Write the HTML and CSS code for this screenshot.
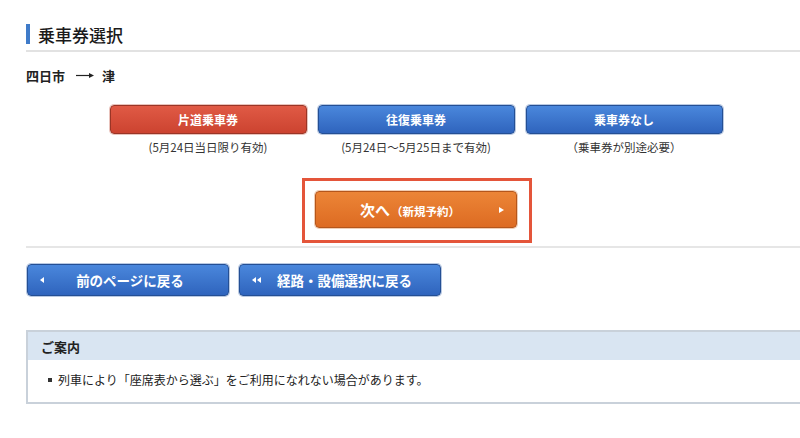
FILE: index.html
```html
<!DOCTYPE html>
<html lang="ja">
<head>
<meta charset="utf-8">
<link rel="stylesheet" href="styles.css">
</head>
<body>
<div class="page">
  <h1 class="title"><span class="title-bar"></span>乗車券選択</h1>
  <div class="route">四日市<span class="arrow"><svg width="20" height="8" viewBox="0 0 20 8"><path d="M1 4.5H16" stroke="#222" stroke-width="1.2"/><path d="M14 2L19 4.5L14 7Z" fill="#222"/></svg></span>津</div>

  <div class="tickets">
    <div class="ticket">
      <button class="btn btn-red">片道乗車券</button>
      <div class="note">(5月24日当日限り有効)</div>
    </div>
    <div class="ticket">
      <button class="btn btn-blue">往復乗車券</button>
      <div class="note">(5月24日～5月25日まで有効)</div>
    </div>
    <div class="ticket">
      <button class="btn btn-blue">乗車券なし</button>
      <div class="note">（乗車券が別途必要）</div>
    </div>
  </div>

  <div class="next-wrap">
    <div class="next-frame">
      <button class="btn btn-orange"><span class="next-label">次へ<small>（新規予約）</small></span><span class="tri-r"></span></button>
    </div>
  </div>

  <div class="back-row">
    <button class="btn btn-blue btn-back"><span class="tri-l"></span><span class="back-label">前のページに戻る</span></button>
    <button class="btn btn-blue btn-back"><span class="dtri"><span class="tri-l"></span><span class="tri-l"></span></span><span class="back-label">経路・設備選択に戻る</span></button>
  </div>

  <div class="info">
    <div class="info-head">ご案内</div>
    <ul class="info-list">
      <li>列車により「座席表から選ぶ」をご利用になれない場合があります。</li>
    </ul>
  </div>
</div>
</body>
</html>
```

FILE: styles.css
```css
* { box-sizing: border-box; }
html, body { margin: 0; padding: 0; background: #fff; }
body {
  font-family: "Noto Sans CJK JP", "Noto Sans", sans-serif;
  color: #222;
  width: 800px;
  height: 438px;
  overflow: hidden;
}
.page { padding: 22px 0 0 26px; }

.title {
  display: flex;
  align-items: center;
  margin: 0;
  font-size: 17px;
  font-weight: 500;
  color: #1a1a1a;
  border-bottom: 2px solid #e2e2e2;
  padding-bottom: 4px;
  height: 30px;
}
.title-bar {
  display: block;
  width: 4px;
  height: 20px;
  background: #3f7bc9;
  margin-right: 8px;
}

.route {
  display: flex;
  align-items: center;
  margin-top: 14px;
  font-size: 13px;
  font-weight: 700;
  height: 18px;
}
.arrow { display: inline-flex; margin: 0 7px 0 10px; }

.tickets {
  display: flex;
  justify-content: center;
  gap: 11px;
  margin-top: 21px;
  padding-left: 6px;
}
.ticket { display: flex; flex-direction: column; align-items: center; width: 197px; }
.note { font-size: 11.5px; color: #333; margin-top: 5px; line-height: 16px; }

.btn {
  font-family: inherit;
  color: #fff;
  font-weight: 700;
  cursor: pointer;
  border-radius: 4px;
  padding: 0;
}
.tickets .btn { width: 197px; height: 29px; font-size: 12px; }
.btn-red {
  background: linear-gradient(#e05a45, #cc4330);
  border: 1px solid #9a3526;
  box-shadow: 0 0 0 1px #e9c3bc;
}
.btn-blue {
  background: linear-gradient(#4a87dc, #2f64bd);
  border: 1px solid #244f94;
  box-shadow: 0 0 0 1px #b9c9e2;
}
.btn-orange {
  background: linear-gradient(#ec8537, #dd6b22);
  border: 1px solid #b5561b;
  box-shadow: 0 0 0 1px #f0cdb4;
}

.next-wrap {
  display: flex;
  justify-content: center;
  border-bottom: 2px solid #e6e6e6;
  padding-bottom: 3px;
  margin-top: 23px;
}
.next-frame {
  border: 3px solid #e4553a;
  padding: 10px 12px 12px 10px;
  margin-left: 8px;
}
.btn-orange {
  width: 202px;
  height: 37px;
  display: flex;
  align-items: center;
  justify-content: center;
  position: relative;
  font-size: 15px;
}
.next-label { display: flex; align-items: baseline; margin-left: -12px; }
.next-label small { font-size: 11.5px; font-weight: 700; margin-left: 1px; }
.tri-r {
  position: absolute;
  right: 12px;
  top: 50%;
  margin-top: -3px;
  width: 0; height: 0;
  border-left: 5px solid #fff;
  border-top: 3.5px solid transparent;
  border-bottom: 3.5px solid transparent;
}

.back-row {
  display: flex;
  gap: 10px;
  margin-top: 16px;
  padding-left: 1px;
}
.btn-back {
  width: 202px;
  height: 32px;
  display: flex;
  align-items: center;
  font-size: 13.5px;
  padding-left: 12px;
}
.tri-l {
  display: block;
  width: 0; height: 0;
  border-right: 4px solid #fff;
  border-top: 3px solid transparent;
  border-bottom: 3px solid transparent;
}
.dtri { display: flex; gap: 1px; }
.back-label { flex: 1; text-align: center; padding-right: 12px; }

.info {
  margin-top: 34px;
  border: 2px solid #c9d1da;
  border-right: none;
}
.info-head {
  background: #d9e5f2;
  height: 28px;
  display: flex;
  align-items: center;
  padding-left: 13px;
  font-size: 13px;
  font-weight: 700;
}
.info-list {
  margin: 0;
  padding: 11px 0 13px 20px;
  list-style: none;
  font-size: 12px;
  color: #222;
}
.info-list li { position: relative; padding-left: 10px; line-height: 18px; }
.info-list li::before {
  content: "";
  position: absolute;
  left: 0; top: 7px;
  width: 4px; height: 4px;
  background: #333;
}
```
